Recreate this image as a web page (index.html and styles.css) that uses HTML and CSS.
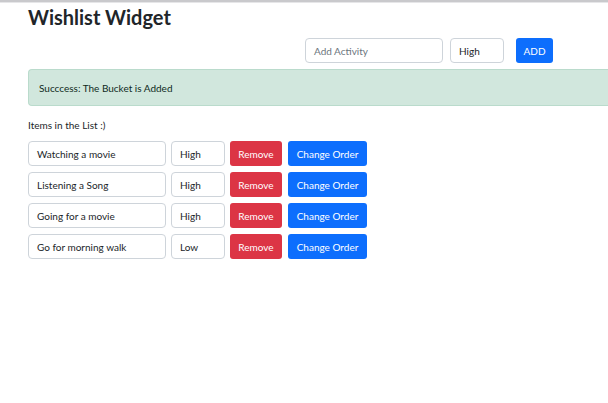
FILE: index.html
```html
<!DOCTYPE html>
<html>
<head>
<meta charset="utf-8">
<link rel="stylesheet" href="styles.css">
</head>
<body>
<div class="topbar"></div>
<div class="page">
  <h1 class="title">Wishlist Widget</h1>
  <div class="add-row">
    <div class="field activity placeholder">Add Activity</div>
    <div class="field priority">High</div>
    <button class="btn btn-primary add">ADD</button>
  </div>
  <div class="alert">Succcess: The Bucket is Added</div>
  <p class="list-label">Items in the List :)</p>
  <div class="list">
    <div class="item">
      <div class="field activity">Watching a movie</div>
      <div class="field priority">High</div>
      <button class="btn btn-danger remove">Remove</button>
      <button class="btn btn-primary order">Change Order</button>
    </div>
    <div class="item">
      <div class="field activity">Listening a Song</div>
      <div class="field priority">High</div>
      <button class="btn btn-danger remove">Remove</button>
      <button class="btn btn-primary order">Change Order</button>
    </div>
    <div class="item">
      <div class="field activity">Going for a movie</div>
      <div class="field priority">High</div>
      <button class="btn btn-danger remove">Remove</button>
      <button class="btn btn-primary order">Change Order</button>
    </div>
    <div class="item">
      <div class="field activity">Go for morning walk</div>
      <div class="field priority">Low</div>
      <button class="btn btn-danger remove">Remove</button>
      <button class="btn btn-primary order">Change Order</button>
    </div>
  </div>
</div>
</body>
</html>
```
FILE: styles.css
```css
html, body {
  margin: 0;
  padding: 0;
  background: #fff;
}
body {
  font-family: Lato, "Noto Sans", sans-serif;
  font-size: 10px;
  color: #212529;
  width: 608px;
  height: 403px;
  overflow: hidden;
}
.topbar {
  height: 2px;
  background: #c9c9cc;
  border-bottom: 1px solid #e6e6e8;
}
.page {
  padding-left: 28px;
}
.title {
  margin: 0;
  font-size: 20px;
  font-weight: 700;
  line-height: 28px;
  height: 35px;
}
.add-row {
  display: flex;
  align-items: center;
  padding-left: 277px;
  height: 25px;
}
.field {
  box-sizing: border-box;
  height: 25px;
  border: 1px solid #ced4da;
  border-radius: 4px;
  padding: 0 0 0 8px;
  display: flex;
  align-items: center;
  background: #fff;
}
.placeholder {
  color: #6c757d;
}
.activity {
  width: 138px;
}
.priority {
  width: 54px;
  margin-left: 5px;
}
.add-row .priority {
  margin-left: 7px;
}
.btn {
  box-sizing: border-box;
  height: 25px;
  border: none;
  border-radius: 3px;
  color: #fff;
  font-family: inherit;
  font-size: 10px;
  padding: 0;
  display: flex;
  align-items: center;
  justify-content: center;
}
.btn-primary {
  background: #0d6efd;
}
.btn-danger {
  background: #dc3545;
}
.add {
  width: 37px;
  margin-left: 12px;
}
.alert {
  box-sizing: border-box;
  margin-top: 6px;
  height: 37px;
  width: 600px;
  background: #d1e7dd;
  border: 1px solid #badbcc;
  border-right: none;
  border-radius: 4px 0 0 4px;
  display: flex;
  align-items: center;
  padding-left: 10px;
  color: #0f2a1c;
}
.list-label {
  margin: 11px 0 0 0;
  line-height: 16px;
}
.list {
  margin-top: 8px;
  display: flex;
  flex-direction: column;
  gap: 6px;
}
.item {
  display: flex;
  align-items: center;
}
.item .field {
  padding-left: 8px;
}
.remove {
  width: 52px;
  margin-left: 5px;
}
.order {
  width: 79px;
  margin-left: 6px;
}
```
